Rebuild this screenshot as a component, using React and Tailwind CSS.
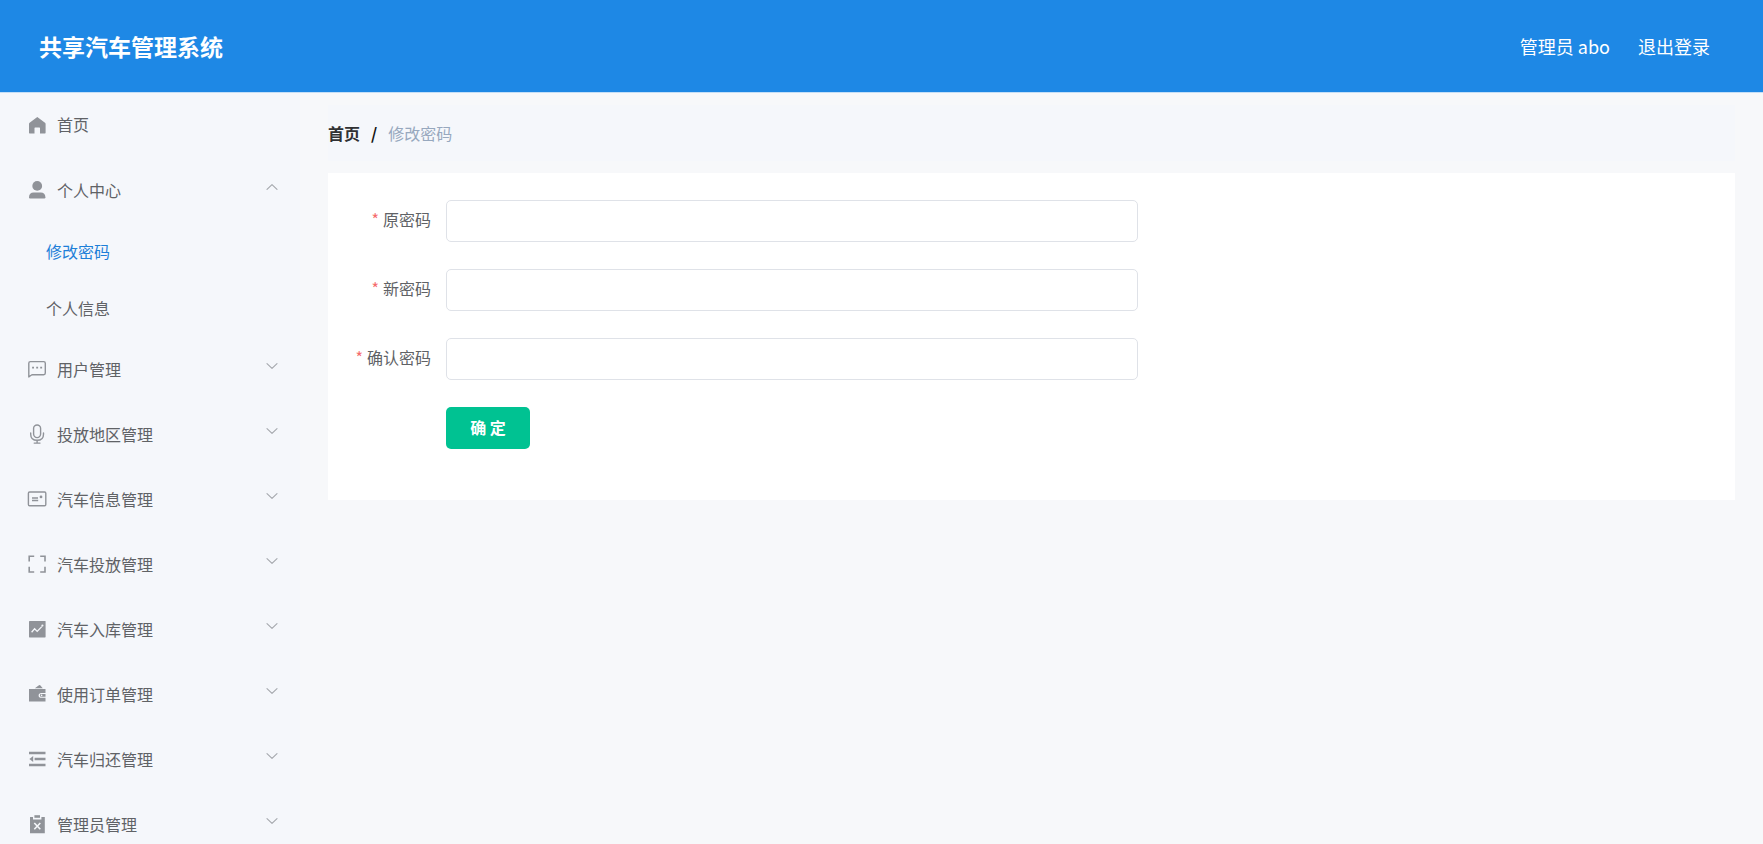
import { useState } from 'react';

// Icônes du menu latéral, toutes dessinées dans une grille de 22
function Icon({ children }) {
  return (
    <svg width="22" height="22" viewBox="0 0 22 22" fill="none" stroke="currentColor" strokeWidth="1.4" className="shrink-0 text-[#909399]" aria-hidden="true">
      {children}
    </svg>
  );
}

const HomeIcon = () => (
  <Icon>
    <path fill="currentColor" stroke="none" d="M11.3 3 19 8.8Q19.6 9.3 19.6 10V18.8Q19.6 19.4 19 19.4H14V14Q14 13.4 13.4 13.4H9.1Q8.5 13.4 8.5 14V19.4H3.6Q3 19.4 3 18.8V10Q3 9.3 3.6 8.8Z" />
  </Icon>
);

const UserIcon = () => (
  <Icon>
    <circle cx="11.2" cy="6.9" r="4.9" fill="currentColor" stroke="none" />
    <path fill="currentColor" stroke="none" d="M3 18.3C3 15.4 4.8 13.6 7.6 13.6H14.8C17.6 13.6 19.4 15.4 19.4 18.3Q19.4 19.6 18.4 19.6H4Q3 19.6 3 18.3Z" />
  </Icon>
);

const ChatIcon = () => (
  <Icon>
    <path d="M2.8 18.9V5.2Q2.8 3.6 4.4 3.6H17.7Q19.3 3.6 19.3 5.2V15.1Q19.3 16.7 17.7 16.7H6.4Q5.7 16.7 5.1 17.2Z" strokeLinejoin="round" />
    <path fill="currentColor" stroke="none" d="M6.1 8.7h1.9v1.9H6.1zM10.2 8.7h1.9v1.9h-1.9zM14.2 8.7h1.9v1.9h-1.9z" />
  </Icon>
);

const MicIcon = () => (
  <Icon>
    <rect x="7.6" y="2" width="7" height="12.6" rx="3.5" />
    <path d="M4.7 10V11.2C4.7 15.2 7.3 17.3 11.1 17.3S17.5 15.2 17.5 11.2V10M11.1 17.3V19.9M8.2 20.1H14" strokeLinecap="round" />
  </Icon>
);

const PostcardIcon = () => (
  <Icon>
    <rect x="2.4" y="4" width="17.4" height="13.7" rx="1.2" />
    <path d="M6 10H12M6 12.5H12.2" />
    <circle cx="15" cy="8.9" r="1.4" fill="currentColor" stroke="none" />
  </Icon>
);

const FullScreenIcon = () => (
  <Icon>
    <path d="M3.2 8.6V3.2H8.2M14.2 3.2H19V8.6M19 13.8V19H14.2M8.2 19H3.2V13.8" strokeWidth="1.6" />
  </Icon>
);

const DataIcon = () => (
  <Icon>
    <rect x="3" y="3" width="16.6" height="16.4" rx="0.6" fill="currentColor" stroke="none" />
    <path d="M5.6 14.2 8.6 10.8 11.2 13.4 15.8 8.6" stroke="#f5f7fb" strokeWidth="1.3" />
    <circle cx="16.4" cy="7.6" r="1.1" fill="#f5f7fb" stroke="none" />
  </Icon>
);

const WalletIcon = () => (
  <Icon>
    <path fill="currentColor" stroke="none" d="M3 6H19.5V10H15.4C13.6 10 12.6 11.1 12.6 12.4S13.6 14.8 15.4 14.8H19.5V18.6H3ZM8.8 5.2 13 2.2Q13.6 1.8 14.2 2.3L16.8 5.2ZM15.4 11.1H19.5V13.7H15.4C14.5 13.7 13.9 13.2 13.9 12.4S14.5 11.1 15.4 11.1Z" />
    <circle cx="15.6" cy="12.4" r="0.8" fill="#f5f7fb" stroke="none" />
  </Icon>
);

const FoldIcon = () => (
  <Icon>
    <path d="M3 5H19.5M8.6 11H19.5M3 17H19.5" strokeWidth="2.4" />
    <path fill="currentColor" stroke="none" d="M3.4 11 7.2 8V14Z" />
  </Icon>
);

const ReleaseIcon = () => (
  <Icon>
    <path fill="currentColor" stroke="none" d="M4 4H7V6.4H15.4V4H18.8V20.2H4Z" />
    <path fill="currentColor" stroke="none" d="M8.4 2.2H14V4.8H8.4Z" />
    <path d="M8.3 10 14.3 16.2M14.3 10 8.3 16.2" stroke="#f5f7fb" strokeWidth="1.6" />
  </Icon>
);

function Chevron({ open }) {
  return (
    <svg width="12" height="8" viewBox="0 0 12 8" fill="none" stroke="#a4a7ac" strokeWidth="1.1" strokeLinecap="round" strokeLinejoin="round" className={`mb-1.5 ml-auto shrink-0 ${open ? 'rotate-180' : ''}`} aria-hidden="true">
      <path d="M1 1.6 6 6.4 11 1.6" />
    </svg>
  );
}

const menus = [
  { name: '个人中心', icon: UserIcon, children: ['修改密码', '个人信息'] },
  { name: '用户管理', icon: ChatIcon, children: ['用户'] },
  { name: '投放地区管理', icon: MicIcon, children: ['投放地区'] },
  { name: '汽车信息管理', icon: PostcardIcon, children: ['汽车信息'] },
  { name: '汽车投放管理', icon: FullScreenIcon, children: ['汽车投放'] },
  { name: '汽车入库管理', icon: DataIcon, children: ['汽车入库'] },
  { name: '使用订单管理', icon: WalletIcon, children: ['使用订单'] },
  { name: '汽车归还管理', icon: FoldIcon, children: ['汽车归还'] },
  { name: '管理员管理', icon: ReleaseIcon, children: ['管理员'] },
];

const fields = [
  { id: 'password', label: '原密码' },
  { id: 'newpassword', label: '新密码' },
  { id: 'ripassword', label: '确认密码' },
];

function Sidebar() {
  const [opened, setOpened] = useState('个人中心');

  return (
    <nav className="w-[300px] shrink-0 overflow-hidden bg-[#f5f7fb] text-[#606266]">
      <a href="#home" className="flex h-16 items-center gap-[9px] pl-[26px]">
        <HomeIcon />
        <span className="pb-0.5">首页</span>
      </a>
      {menus.map(({ name, icon: MenuIcon, children }) => (
        <div key={name}>
          <button
            type="button"
            aria-expanded={opened === name}
            onClick={() => setOpened(opened === name ? '' : name)}
            className="flex h-[65px] w-full items-center gap-[9px] pr-[22px] pl-[26px]"
          >
            <MenuIcon />
            <span>{name}</span>
            <Chevron open={opened === name} />
          </button>
          {opened === name && children.map((child) => (
            <a
              key={child}
              href={`#${child}`}
              className={`flex h-[57px] items-center pl-[46px] ${child === '修改密码' ? 'text-[#1e7fd8]' : ''}`}
            >
              {child}
            </a>
          ))}
        </div>
      ))}
    </nav>
  );
}

export default function App() {
  return (
    <div className="flex h-screen flex-col overflow-hidden bg-[#f7f8fa] font-['Noto_Sans_CJK_SC',sans-serif] text-base">
      <header className="flex h-[93px] shrink-0 items-center justify-between border-b border-[#c5dff7] bg-[#1e88e5] pr-[53px] pl-[39px] text-white">
        <h1 className="text-[23px] font-bold">共享汽车管理系统</h1>
        <div className="flex items-center gap-7 text-lg">
          <span>管理员 abo</span>
          <button type="button">退出登录</button>
        </div>
      </header>

      <div className="flex min-h-0 flex-1">
        <Sidebar />

        <main className="min-w-0 flex-1 px-7 pt-3">
          {/* Fil d'Ariane */}
          <div className="mb-3 flex h-14 items-center bg-[#f5f7fb]">
            <a href="#home" className="font-bold text-[#303133]">首页</a>
            <span className="mx-[11px] font-bold text-[#111111]">/</span>
            <span className="text-[#97a8be]">修改密码</span>
          </div>

          {/* Formulaire */}
          <form className="bg-white pt-[27px] pb-[51px]" onSubmit={(e) => e.preventDefault()}>
            {fields.map(({ id, label }) => (
              <div key={id} className="mb-[27px] flex h-[42px] items-center">
                <label htmlFor={id} className="w-[118px] shrink-0 pr-[15px] pb-1 text-right text-[#606266]">
                  <span className="mr-1 text-[#f56c6c]">*</span>{label}
                </label>
                <input id={id} type="password" className="h-full w-full max-w-[692px] rounded-[5px] border border-[#dfe2e8] bg-white px-4 outline-none focus:border-[#1e88e5]" />
              </div>
            ))}
            <button type="submit" className="ml-[118px] h-[42px] w-[84px] rounded-[5px] bg-[#00c292] pb-0.5 font-bold text-white">
              确 定
            </button>
          </form>
        </main>
      </div>
    </div>
  );
}
